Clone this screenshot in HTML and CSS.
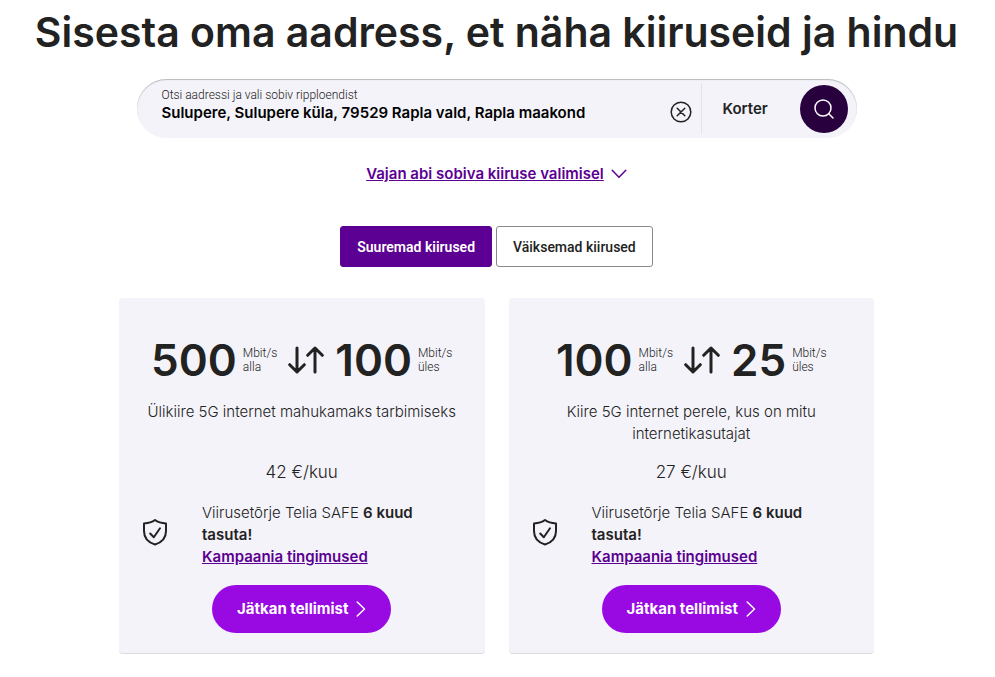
FILE: index.html
```html
<!DOCTYPE html>
<html lang="et">
<head>
<meta charset="utf-8">
<meta name="viewport" content="width=device-width, initial-scale=1">
<title>Kiirused ja hinnad</title>
<link rel="stylesheet" href="styles.css">
</head>
<body>
<main class="page">
  <h1 class="title">Sisesta oma aadress, et näha kiiruseid ja hindu</h1>

  <form class="search">
    <div class="field">
      <label class="field-label" for="address">Otsi aadressi ja vali sobiv ripploendist</label>
      <input class="field-input" id="address" type="text" value="Sulupere, Sulupere küla, 79529 Rapla vald, Rapla maakond">
    </div>
    <button class="clear" type="button" aria-label="Tühjenda">
      <svg width="22" height="22" viewBox="0 0 22 22" fill="none" stroke="currentColor" stroke-width="1.5" stroke-linecap="round"><circle cx="11" cy="11" r="9.8"/><path d="M7.2 7.2l7.6 7.6M14.8 7.2l-7.6 7.6"/></svg>
    </button>
    <input class="apartment" type="text" placeholder="Korter" aria-label="Korter">
    <button class="submit" type="submit" aria-label="Otsi">
      <svg width="20" height="20" viewBox="0 0 20 20" fill="none" stroke="currentColor" stroke-width="1.5" stroke-linecap="round"><circle cx="9" cy="9" r="8"/><path d="M14.8 14.8L19 19"/></svg>
    </button>
  </form>

  <a class="help" href="#abi"><span class="help-text">Vajan abi sobiva kiiruse valimisel</span>
    <svg width="16" height="10" viewBox="0 0 16 10" fill="none" stroke="currentColor" stroke-width="1.5" stroke-linecap="round" stroke-linejoin="round"><path d="M1.2 1.2L8 8.2l6.8-7"/></svg>
  </a>

  <div class="tabs">
    <button class="tab tab-active" type="button">Suuremad kiirused</button>
    <button class="tab" type="button">Väiksemad kiirused</button>
  </div>

  <div class="cards">
    <article class="card">
      <div class="speeds">
        <span class="speed">500</span>
        <span class="unit">Mbit/s<br>alla</span>
        <svg class="arrows" width="36" height="28" viewBox="0 0 36 28" fill="none" stroke="currentColor" stroke-width="3" stroke-linecap="round" stroke-linejoin="round"><path d="M9 2v24M1.7 18.7L9 26l7.3-7.3M27 26V2M19.7 9.3L27 2l7.3 7.3"/></svg>
        <span class="speed">100</span>
        <span class="unit">Mbit/s<br>üles</span>
      </div>
      <p class="summary">Ülikiire 5G internet mahukamaks tarbimiseks</p>
      <p class="price">42 €/kuu</p>
      <div class="promo">
        <svg class="shield" width="26" height="28" viewBox="0 0 26 28" fill="none" stroke="currentColor" stroke-width="2" stroke-linecap="round" stroke-linejoin="round"><path d="M13 2C10 4.3 6 5.2 2 5.4V13c0 6.5 4.3 11.5 11 13.5 6.7-2 11-7 11-13.5V5.4C20 5.2 16 4.3 13 2z"/><path d="M8.2 15.5l3.6 3.7 6.2-9"/></svg>
        <p class="promo-text">Viirusetõrje Telia SAFE <strong>6 kuud</strong> <strong>tasuta!</strong><br><a class="terms" href="#tingimused">Kampaania tingimused</a></p>
      </div>
      <button class="order" type="button">Jätkan tellimist
        <svg width="10" height="16" viewBox="0 0 10 16" fill="none" stroke="currentColor" stroke-width="1.5" stroke-linecap="round" stroke-linejoin="round"><path d="M1.2 1L8.5 8l-7.3 7"/></svg>
      </button>
    </article>

    <article class="card">
      <div class="speeds">
        <span class="speed">100</span>
        <span class="unit">Mbit/s<br>alla</span>
        <svg class="arrows" width="36" height="28" viewBox="0 0 36 28" fill="none" stroke="currentColor" stroke-width="3" stroke-linecap="round" stroke-linejoin="round"><path d="M9 2v24M1.7 18.7L9 26l7.3-7.3M27 26V2M19.7 9.3L27 2l7.3 7.3"/></svg>
        <span class="speed">25</span>
        <span class="unit">Mbit/s<br>üles</span>
      </div>
      <p class="summary">Kiire 5G internet perele, kus on mitu internetikasutajat</p>
      <p class="price">27 €/kuu</p>
      <div class="promo">
        <svg class="shield" width="26" height="28" viewBox="0 0 26 28" fill="none" stroke="currentColor" stroke-width="2" stroke-linecap="round" stroke-linejoin="round"><path d="M13 2C10 4.3 6 5.2 2 5.4V13c0 6.5 4.3 11.5 11 13.5 6.7-2 11-7 11-13.5V5.4C20 5.2 16 4.3 13 2z"/><path d="M8.2 15.5l3.6 3.7 6.2-9"/></svg>
        <p class="promo-text">Viirusetõrje Telia SAFE <strong>6 kuud</strong> <strong>tasuta!</strong><br><a class="terms" href="#tingimused">Kampaania tingimused</a></p>
      </div>
      <button class="order" type="button">Jätkan tellimist
        <svg width="10" height="16" viewBox="0 0 10 16" fill="none" stroke="currentColor" stroke-width="1.5" stroke-linecap="round" stroke-linejoin="round"><path d="M1.2 1L8.5 8l-7.3 7"/></svg>
      </button>
    </article>
  </div>
</main>
</body>
</html>
```
FILE: styles.css
```css
* { box-sizing: border-box; }
body {
  margin: 0;
  background: #fff;
  color: #222;
  font-family: Inter, "Liberation Sans", sans-serif;
  font-size: 15px;
  line-height: 22px;
}
h1, p { margin: 0; }
button, input { font: inherit; color: inherit; }
button { cursor: pointer; }
svg { display: block; flex: none; }

.page {
  display: flex;
  flex-direction: column;
  align-items: center;
  padding: 8px 16px 22px 14px;
}
.title {
  font-size: 41px;
  line-height: 48px;
  font-weight: 600;
  text-align: center;
}

.search {
  display: flex;
  align-items: center;
  width: 100%;
  max-width: 720px;
  height: 59px;
  margin-top: 23px;
  padding: 0 9px 0 25px;
  border-radius: 30px;
  background: #f4f3f9;
  box-shadow: inset 0 1px 1px #b9b9bd;
}
.field {
  flex: 1;
  min-width: 0;
  padding-bottom: 7px;
}
.field-label {
  display: block;
  font-family: Roboto, "Liberation Sans", sans-serif;
  font-size: 12px;
  line-height: 16px;
  font-weight: 300;
}
.field-input {
  display: block;
  width: 100%;
  height: 20px;
  padding: 0;
  border: 0;
  background: none;
  color: #000;
  font-weight: 600;
}
.clear {
  margin: 6px 9px 0 0;
  padding: 0;
  border: 0;
  background: none;
}
.apartment {
  width: 99px;
  height: 51px;
  padding: 0 0 0 21px;
  border: 0;
  border-left: 1px solid #e4e3e9;
  background: none;
  font-weight: 600;
}
.apartment::placeholder { color: #222; opacity: 1; }
.submit {
  display: grid;
  place-items: center;
  flex: none;
  width: 48px;
  height: 48px;
  padding: 0;
  border: 0;
  border-radius: 50%;
  background: #29003e;
  color: #fff;
}

.help {
  display: flex;
  align-items: center;
  gap: 7px;
  margin-top: 25px;
  color: #5b0092;
  font-weight: 600;
  text-decoration: none;
}
.help-text { text-decoration: underline; }

.tabs {
  display: flex;
  gap: 4px;
  margin-top: 41px;
}
.tab {
  height: 41px;
  padding: 0 16px;
  border: 1px solid #8a8a8a;
  border-radius: 3px;
  background: #fff;
  font-family: Roboto, "Liberation Sans", sans-serif;
  font-size: 14px;
  font-weight: 500;
}
.tab-active {
  border-color: #5b0092;
  background: #5b0092;
  color: #fff;
  font-weight: 600;
}

.cards {
  display: grid;
  grid-template-columns: 1fr 1fr;
  gap: 24px;
  width: 100%;
  max-width: 755px;
  margin-top: 31px;
}
.card {
  display: flex;
  flex-direction: column;
  align-items: center;
  padding: 40px 24px 20px;
  border-bottom: 1px solid #dcdbe0;
  border-radius: 4px;
  background: #f4f3f9;
}
.speeds {
  display: flex;
  align-items: center;
}
.speed {
  font-size: 44px;
  line-height: 44px;
  font-weight: 600;
}
.unit {
  margin-left: 6px;
  font-family: Roboto, "Liberation Sans", sans-serif;
  font-size: 12px;
  line-height: 14px;
  font-weight: 300;
}
.arrows { margin: 0 11px; }
.summary {
  min-height: 44px;
  margin-top: 19px;
  font-weight: 300;
  text-align: center;
}
.price {
  margin-top: 16px;
  font-size: 17px;
  font-weight: 300;
}
.promo {
  display: flex;
  align-items: flex-start;
  gap: 34px;
  width: 100%;
  margin-top: 19px;
}
.shield { margin: 16px 0 0 -1px; }
.promo-text { font-weight: 300; }
.promo-text strong { font-weight: 600; }
.terms { color: #5b0092; font-weight: 600; }
.order {
  display: flex;
  align-items: center;
  gap: 8px;
  height: 48px;
  margin-top: 17px;
  padding: 0 25px;
  border: 0;
  border-radius: 24px;
  background: #990ae3;
  color: #fff;
  font-weight: 700;
}
```
